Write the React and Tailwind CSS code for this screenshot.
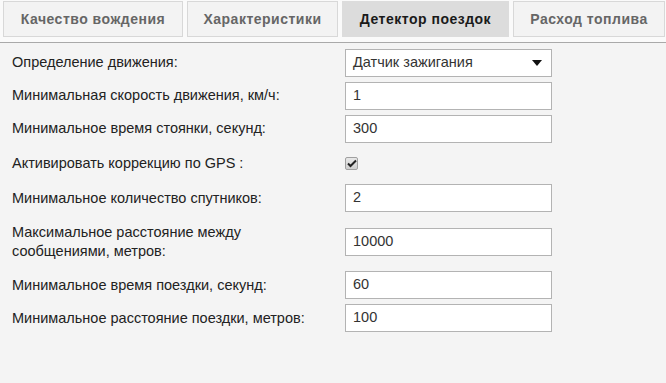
import { useState } from 'react'

const tabs = [
  { label: 'Качество вождения', w: 'w-[180px]' },
  { label: 'Характеристики', w: 'w-[151px]' },
  { label: 'Детектор поездок', w: 'w-[167px]', active: true },
  { label: 'Расход топлива', w: 'w-[152px]' },
]

function Field({ value }) {
  return (
    <div className="w-[207px] h-[28px] border border-[#b3b3b3] bg-white flex items-center pl-[7px] text-[14.5px] text-[#333]">
      {value}
    </div>
  )
}

function Row({ h, label, children }) {
  return (
    <div className={`flex items-center ${h}`}>
      <div className="w-[345px] pl-[12px] pr-4 text-[14.5px] leading-[19px] text-[#222]">{label}</div>
      {children}
    </div>
  )
}

export default function App() {
  const [gps] = useState(true)

  return (
    <div className="w-[666px] h-[383px] bg-[#f4f4f4] overflow-hidden" style={{ fontFamily: '"Liberation Sans", Arial, sans-serif' }}>
      <div className="bg-[#fafafa] pt-[1px] pb-[5px] border-b border-[#a9a9a9]">
        <div className="flex gap-[4px] pl-[3px]">
          {tabs.map((t) =>
            t.active ? (
              <div key={t.label} className={`${t.w} h-[36px] bg-[#dcdcdc] flex items-center justify-center text-[14px] font-bold text-[#1a1a1a] tracking-[0.5px]`}>
                {t.label}
              </div>
            ) : (
              <div key={t.label} className={`${t.w} h-[36px] bg-[#f3f3f3] border border-[#d8d8d8] flex items-center justify-center text-[14px] font-bold text-[#666] tracking-[0.5px]`}>
                {t.label}
              </div>
            )
          )}
        </div>
      </div>

      <div className="pt-[3px]">
        <Row h="h-[33px]" label="Определение движения:">
          <div className="w-[207px] h-[28px] border border-[#b3b3b3] bg-white flex items-center justify-between pl-[7px] pr-[9px] text-[14.5px] text-[#333]">
            <span>Датчик зажигания</span>
            <svg width="10" height="6" viewBox="0 0 10 6"><path d="M0 0h10L5 6z" fill="#111" /></svg>
          </div>
        </Row>
        <Row h="h-[33px]" label="Минимальная скорость движения, км/ч:">
          <Field value="1" />
        </Row>
        <Row h="h-[33px]" label="Минимальное время стоянки, секунд:">
          <Field value="300" />
        </Row>
        <Row h="h-[37px]" label="Активировать коррекцию по GPS :">
          <div className="w-[13px] h-[13px] rounded-[2px] border border-[#a0a0a0] bg-gradient-to-b from-[#e8e8e8] to-[#cfcfcf] flex items-center justify-center">
            {gps && (
              <svg width="10" height="9" viewBox="0 0 10 9"><path d="M1 4.5l2.5 2.5L9 1.5" stroke="#222" strokeWidth="2" fill="none" /></svg>
            )}
          </div>
        </Row>
        <Row h="h-[32px]" label="Минимальное количество спутников:">
          <Field value="2" />
        </Row>
        <Row h="h-[56px]" label={<>Максимальное расстояние между<br />сообщениями, метров:</>}>
          <Field value="10000" />
        </Row>
        <Row h="h-[30px]" label="Минимальное время поездки, секунд:">
          <Field value="60" />
        </Row>
        <Row h="h-[36px]" label="Минимальное расстояние поездки, метров:">
          <Field value="100" />
        </Row>
      </div>
    </div>
  )
}
